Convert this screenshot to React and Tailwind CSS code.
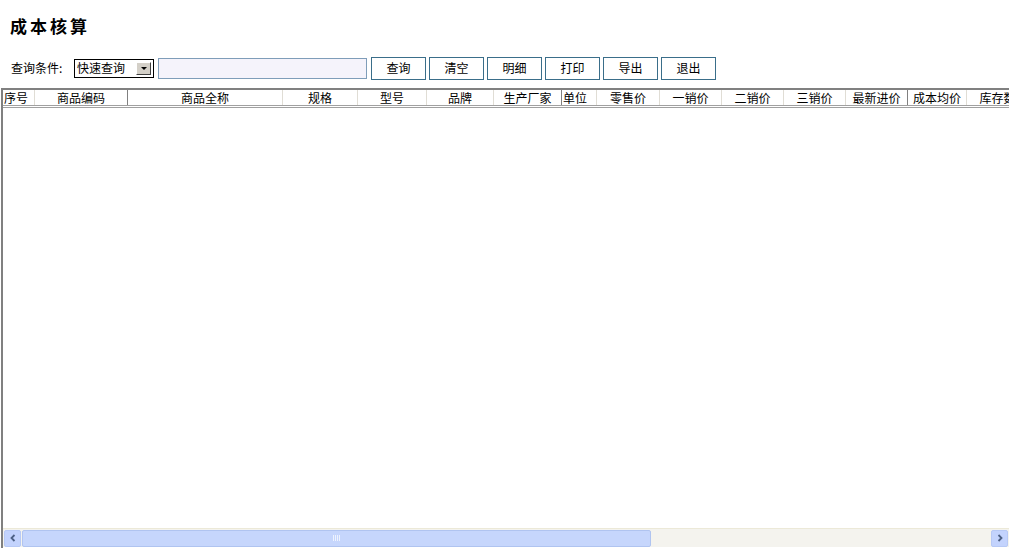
import React from 'react';

const columns = [
  { label: '序号', w: 32, align: 'left', dark: false },
  { label: '商品编码', w: 93, dark: true },
  { label: '商品全称', w: 155 },
  { label: '规格', w: 75 },
  { label: '型号', w: 69 },
  { label: '品牌', w: 67 },
  { label: '生产厂家', w: 68, dark: true },
  { label: '单位', w: 35, align: 'left' },
  { label: '零售价', w: 63 },
  { label: '一销价', w: 62 },
  { label: '二销价', w: 62 },
  { label: '三销价', w: 62 },
  { label: '最新进价', w: 62, dark: true },
  { label: '成本均价', w: 59 },
  { label: '库存数', w: 62 },
];

const buttons = ['查询', '清空', '明细', '打印', '导出', '退出'];

const App = () => {
  return (
    <div
      className="w-[1010px] h-[553px] bg-white overflow-hidden text-[12px] text-black"
      style={{ fontFamily: '"Noto Sans CJK SC", "Liberation Sans", sans-serif' }}
    >
      <div className="pl-[10px] pt-[13px] h-[55px]">
        <h1 className="text-[17px] font-bold tracking-[3px] leading-[26px]">成本核算</h1>
      </div>

      <div className="flex items-center h-[26px] pl-[11px]">
        <span className="leading-[20px] w-[63px]">查询条件:</span>
        <div className="w-[80px] h-[19px] border border-black flex items-center justify-between pl-[2px] pr-[2px]">
          <span className="leading-[16px]">快速查询</span>
          <div className="w-[15px] h-[13px] bg-[#d4d0c8] border border-t-white border-l-white border-r-[#404040] border-b-[#404040] flex items-center justify-center">
            <div className="w-0 h-0 border-l-[3px] border-r-[3px] border-t-[3px] border-l-transparent border-r-transparent border-t-black" />
          </div>
        </div>
        <div className="ml-[4px] w-[209px] h-[21px] border border-[#7f9db9] bg-[#f5f3fb]" />
        <div className="flex gap-[3px] ml-[4px]">
          {buttons.map(b => (
            <div
              key={b}
              className="w-[55px] h-[23px] border border-[#3a6e8a] bg-white flex items-center justify-center leading-[16px]"
            >
              {b}
            </div>
          ))}
        </div>
      </div>

      <div className="ml-[1px] mt-[7px] w-[1008px] h-[460px] border-l-2 border-t-2 border-[#808080] flex flex-col overflow-hidden">
        <div className="flex h-[18px] border-b-[3px] border-double border-[#a0a0a0] shrink-0">
          {columns.map((c, i) => (
            <div
              key={i}
              className={`shrink-0 h-full flex items-center px-[1px] whitespace-nowrap overflow-hidden leading-[15px] border-r ${
                c.dark ? 'border-[#808080]' : 'border-[#e0ddd5]'
              } ${c.align === 'left' ? 'justify-start' : 'justify-center'}`}
              style={{ width: c.w }}
            >
              {c.label}
            </div>
          ))}
        </div>
        <div className="flex-1" />
        <div className="h-[19px] mb-[1px] flex items-center bg-[#f4f3ee] border-t border-[#ece9d8] shrink-0 pl-[1px] pr-[1px]">
          <div className="w-[17px] h-[17px] rounded-[2px] bg-[#c3d3fd] border border-[#b7c9f5] flex items-center justify-center">
            <svg width="8" height="8" viewBox="0 0 8 8">
              <path d="M5.5 1 L2.5 4 L5.5 7" stroke="#4d6185" strokeWidth="1.8" fill="none" />
            </svg>
          </div>
          <div className="ml-[1px] w-[629px] h-[17px] rounded-[2px] bg-[#c6d6fc] border border-[#b0c4f0] flex items-center justify-center">
            <svg width="8" height="6" viewBox="0 0 8 6">
              <path d="M0.5 0 V6 M2.5 0 V6 M4.5 0 V6 M6.5 0 V6" stroke="#eef3fe" strokeWidth="1" />
            </svg>
          </div>
          <div className="flex-1" />
          <div className="w-[17px] h-[17px] rounded-[2px] bg-[#c3d3fd] border border-[#b7c9f5] flex items-center justify-center">
            <svg width="8" height="8" viewBox="0 0 8 8">
              <path d="M2.5 1 L5.5 4 L2.5 7" stroke="#4d6185" strokeWidth="1.8" fill="none" />
            </svg>
          </div>
        </div>
      </div>
    </div>
  );
};

export default App;
